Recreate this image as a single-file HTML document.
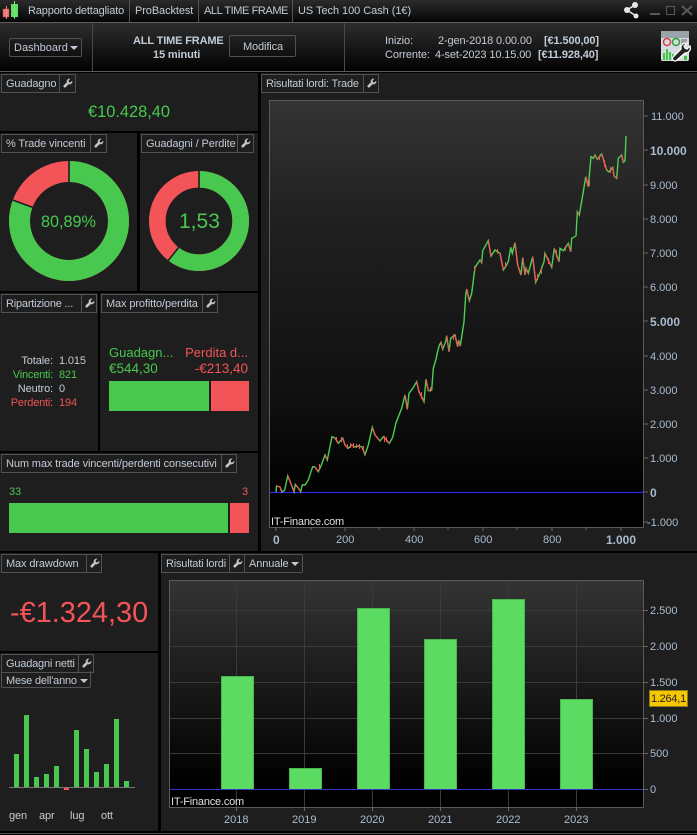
<!DOCTYPE html>
<html lang="it"><head><meta charset="utf-8"><title>Rapporto dettagliato</title>
<style>
html,body{margin:0;padding:0;background:#000}
#r{position:relative;width:697px;height:835px;overflow:hidden;background:#000;font-family:"Liberation Sans",Arial,sans-serif;font-size:11px;color:#c2ccd6}
.a{position:absolute}
.t{position:absolute;white-space:nowrap;line-height:14px;margin-top:1px;letter-spacing:-.12px}
.p{position:absolute;background:#1e1e1e}
.h{position:absolute;height:17px;border:1px solid #525252;box-sizing:content-box}
.d{position:absolute;top:0;bottom:0;width:1px;background:#525252}
.w{position:absolute;width:10px;height:10px;fill:#c4c4c4;margin:1px 0 0 1px}
.g{color:#48c84e}.e{color:#f25457}
.ax{font-size:11px;color:#a9bccf;letter-spacing:0}
.b{font-weight:bold}
.tri{position:absolute;width:0;height:0;border-left:4px solid transparent;border-right:4px solid transparent;border-top:4px solid #c2ccd6}
</style></head><body><div id="r">
<svg width="0" height="0" style="position:absolute"><symbol id="wr" viewBox="0 0 24 24"><path d="M22 6.500l-4.200 4.200-3.600-.9-.9-3.600L17.500 2a6.500 6.500 0 0 0-8.300 8.300L2 17.500a3 3 0 0 0 4.500 4.500l7.200-7.200A6.500 6.500 0 0 0 22 6.500z"/></symbol></svg>

<!-- title bar -->
<div class="a" style="left:0;top:0;width:697px;height:22px;background:linear-gradient(#2b2b2b,#050505)"></div>
<div class="a" style="left:0;top:22px;width:697px;height:1px;background:#5c5c5c"></div>
<svg class="a" style="left:2px;top:1px" width="18" height="18"><rect x="1" y="8" width="6" height="8" fill="#f07a7c" stroke="#c44" stroke-width=".5"/><rect x="4" y="5" width="1" height="13" fill="#e88"/><rect x="9" y="3" width="7" height="13" fill="#5fe060"/><rect x="12" y="0" width="1" height="18" fill="#7de87e"/></svg>
<div class="t" style="left:28px;top:3px;letter-spacing:-.15px">Rapporto dettagliato</div>
<div class="a" style="left:129px;top:0;width:1px;height:22px;background:#555"></div>
<div class="t" style="left:135px;top:3px;letter-spacing:-.1px">ProBacktest</div>
<div class="a" style="left:198px;top:0;width:1px;height:22px;background:#555"></div>
<div class="t" style="left:204px;top:3px;letter-spacing:-.42px">ALL TIME FRAME</div>
<div class="a" style="left:292px;top:0;width:1px;height:22px;background:#555"></div>
<div class="t" style="left:298px;top:3px;letter-spacing:-.05px">US Tech 100 Cash (1€)</div>
<svg class="a" style="left:622px;top:1px" width="20" height="18"><g fill="#e8e8e8"><circle cx="5" cy="9" r="3"/><circle cx="13" cy="4" r="3"/><circle cx="14" cy="15" r="2.500"/></g><path d="M5 9L13 4M5 9L14 15" stroke="#e8e8e8" stroke-width="1.500"/></svg>
<div class="a" style="left:650px;top:13px;width:10px;height:2px;background:#5a5a5a"></div>
<div class="a" style="left:666px;top:6px;width:7px;height:7px;border:1.500px solid #5a5a5a"></div>
<svg class="a" style="left:681px;top:5px" width="12" height="11"><path d="M1 1L11 10M11 1L1 10" stroke="#5a5a5a" stroke-width="2"/></svg>

<!-- toolbar -->
<div class="a" style="left:0;top:23px;width:697px;height:48px;background:linear-gradient(#2d2d2d,#020202)"></div>
<div class="a" style="left:0;top:71px;width:697px;height:1px;background:#5c5c5c"></div>
<div class="a" style="left:92px;top:23px;width:1px;height:48px;background:#4a4a4a"></div>
<div class="a" style="left:344px;top:23px;width:1px;height:48px;background:#4a4a4a"></div>
<div class="a" style="left:9px;top:38px;width:71px;height:17px;border:1px solid #525252;border-radius:2px"></div>
<div class="t" style="left:14px;top:40px;letter-spacing:0">Dashboard</div>
<div class="tri" style="left:70px;top:46px"></div>
<div class="t b" style="left:133px;top:33px;letter-spacing:-.15px">ALL TIME FRAME</div>
<div class="t b" style="left:153px;top:47px">15 minuti</div>
<div class="a" style="left:229px;top:35px;width:65px;height:20px;border:1px solid #525252;border-radius:2px"></div>
<div class="t" style="left:243px;top:39px">Modifica</div>
<div class="t" style="left:385px;top:33px">Inizio:</div>
<div class="t" style="left:438px;top:33px">2-gen-2018 0.00.00</div>
<div class="t b" style="left:544px;top:33px">[€1.500,00]</div>
<div class="t" style="left:385px;top:47px">Corrente:</div>
<div class="t" style="left:435px;top:47px">4-set-2023 10.15.00</div>
<div class="t b" style="left:538px;top:47px">[€11.928,40]</div>
<svg class="a" style="left:660px;top:30px" width="32" height="34"><rect x="1" y="1" width="28" height="30" rx="2" fill="#d5dbe0"/><rect x="1" y="1" width="28" height="7" fill="#9aa3aa"/><circle cx="7" cy="12" r="3.500" fill="none" stroke="#d84040" stroke-width="1.500"/><circle cx="16" cy="12" r="3.500" fill="none" stroke="#2ca02c" stroke-width="1.500"/><path d="M21 10h6M21 12h6M21 14h6" stroke="#666"/><path d="M3 30V23h2v7zM6 30V19h2v11zM9 30v-8h2v8zM12 30v-6h2v6zM24 30v-4h3v4z" fill="#3fc43f"/><path d="M30 16l-3 3-2-1-1-2 3-3a5 5 0 0 0-6 6L13 27a2.500 2.500 0 0 0 4 3l8-7a5 5 0 0 0 5-7z" fill="#222" stroke="#fff" stroke-width="1.300"/></svg>

<!-- left panels -->
<div class="p" style="left:0;top:73px;width:258px;height:58px"></div>
<div class="h" style="left:1px;top:74px;width:73px"><div class="d" style="left:57px"></div><svg class="w" style="left:60px;top:2px"><use href="#wr"/></svg></div>
<div class="t" style="left:6px;top:76px">Guadagno</div>
<div class="t g" style="left:88px;top:104px;font-size:16.400px;letter-spacing:0">€10.428,40</div>

<div class="p" style="left:0;top:133px;width:137px;height:158px"></div>
<div class="h" style="left:1px;top:134px;width:104px"><div class="d" style="left:88px"></div><svg class="w" style="left:91px;top:2px"><use href="#wr"/></svg></div>
<div class="t" style="left:6px;top:136px">% Trade vincenti</div>
<div class="p" style="left:140px;top:133px;width:118px;height:158px"></div>
<div class="h" style="left:141px;top:134px;width:111px"><div class="d" style="left:95px"></div><svg class="w" style="left:98px;top:2px"><use href="#wr"/></svg></div>
<div class="t" style="left:146px;top:136px">Guadagni / Perdite</div>
<svg class="a" style="left:0;top:133px" width="258" height="158">
<g transform="translate(69 88) rotate(-90)" fill="none" stroke-width="21"><circle r="49.500" stroke="#f25457"/><circle r="49.500" stroke="#48c84e" pathLength="100" stroke-dasharray="80.890 19.110"/></g>
<path d="M69 27V50M12.700 67L33 74.500" stroke="#1e1e1e" stroke-width="1.600"/>
<g transform="translate(199 88) rotate(-90)" fill="none" stroke-width="16.700"><circle r="41.700" stroke="#f25457"/><circle r="41.700" stroke="#48c84e" pathLength="100" stroke-dasharray="60.500 39.500"/></g>
<path d="M199 37V56M168.300 127.500L178.600 114.500" stroke="#1e1e1e" stroke-width="1.600"/>
</svg>
<div class="t g" style="left:41px;top:214px;font-size:16.200px;letter-spacing:0">80,89%</div>
<div class="t g" style="left:179px;top:214px;font-size:21px;letter-spacing:0">1,53</div>

<div class="p" style="left:0;top:293px;width:98px;height:158px"></div>
<div class="h" style="left:1px;top:294px;width:94px"><div class="d" style="left:79px"></div><svg class="w" style="left:82px;top:2px"><use href="#wr"/></svg></div>
<div class="t" style="left:6px;top:296px;letter-spacing:-.2px">Ripartizione ...</div>
<div class="t" style="right:644px;top:353px">Totale:</div><div class="t" style="left:59px;top:353px">1.015</div>
<div class="t g" style="right:644px;top:367px;letter-spacing:-.2px">Vincenti:</div><div class="t g" style="left:59px;top:367px">821</div>
<div class="t" style="right:644px;top:381px">Neutro:</div><div class="t" style="left:59px;top:381px">0</div>
<div class="t e" style="right:644px;top:395px;letter-spacing:-.2px">Perdenti:</div><div class="t e" style="left:59px;top:395px">194</div>

<div class="p" style="left:100px;top:293px;width:158px;height:158px"></div>
<div class="h" style="left:101px;top:294px;width:115px"><div class="d" style="left:100px"></div><svg class="w" style="left:103px;top:2px"><use href="#wr"/></svg></div>
<div class="t" style="left:106px;top:296px">Max profitto/perdita</div>
<div class="t g" style="left:109px;top:345px;font-size:13px;letter-spacing:0">Guadagn...</div>
<div class="t e" style="right:449px;top:345px;font-size:13px;letter-spacing:0">Perdita d...</div>
<div class="t g" style="left:109px;top:361px;font-size:13.500px;letter-spacing:0">€544,30</div>
<div class="t e" style="right:449px;top:361px;font-size:13.500px;letter-spacing:0">-€213,40</div>
<div class="a" style="left:109px;top:381px;width:100px;height:30px;background:#48c84e"></div>
<div class="a" style="left:211px;top:381px;width:38px;height:30px;background:#f25457"></div>

<div class="p" style="left:0;top:453px;width:258px;height:98px"></div>
<div class="h" style="left:1px;top:454px;width:234px"><div class="d" style="left:219px"></div><svg class="w" style="left:222px;top:2px"><use href="#wr"/></svg></div>
<div class="t" style="left:6px;top:456px">Num max trade vincenti/perdenti consecutivi</div>
<div class="t g" style="left:9px;top:484px">33</div>
<div class="t e" style="right:449px;top:484px">3</div>
<div class="a" style="left:9px;top:503px;width:219px;height:30px;background:#48c84e"></div>
<div class="a" style="left:230px;top:503px;width:19px;height:30px;background:#f25457"></div>

<!-- top chart -->
<div class="p" style="left:261px;top:73px;width:436px;height:478px"></div>
<div class="h" style="left:261px;top:74px;width:116px"><div class="d" style="left:101px"></div><svg class="w" style="left:104px;top:2px"><use href="#wr"/></svg></div>
<div class="t" style="left:266px;top:76px;letter-spacing:-.2px">Risultati lordi: Trade</div>
<svg class="a" style="left:0;top:0" width="697" height="551">
<defs><linearGradient id="bg1" x1="0" y1="0" x2="0" y2="1"><stop offset="0" stop-color="#343434"/><stop offset=".3" stop-color="#1f1f1f"/><stop offset=".7" stop-color="#101010"/><stop offset=".93" stop-color="#000"/><stop offset="1" stop-color="#000"/></linearGradient></defs>
<rect x="269.500" y="100.500" width="374" height="427" fill="url(#bg1)" stroke="#5a5a5a"/>
<path d="M643 116h5M643 150h5M643 185h5M643 219h5M643 253h5M643 287h5M643 321h5M643 356h5M643 390h5M643 424h5M643 458h5M643 492h5M643 522h5M276 527v4M311 527v3M345 527v4M379 527v3M414 527v4M448 527v3M483 527v4M517 527v3M552 527v4M586 527v3M621 527v4" stroke="#666" fill="none"/>
<path d="M269.500 492.500H643.500" stroke="#2b2be6" stroke-width="1.200"/>
<polyline fill="none" stroke="#4cd052" stroke-width="1.400" stroke-linejoin="miter" points="276,492 276.500,486 280,487 282,492 284.700,490 287.700,475.700 290.700,483 294,491.700 295.300,484.300 298.300,488 300.700,491.700 302.300,485 305,485 308.300,480 310.700,472.700 312.700,466.700 315,467 318.300,471.700 321,466 325,455 327.300,460 329.300,450 332,436.700 335,438 338.300,443.300 342.700,438.300 345,445 348.300,448.300 351.700,445 355,447 358.300,446 362,447 365,454.700 368.300,445 372.300,427.300 375,435 380,441 383.300,436.700 389.300,443.300 392.700,437.300 396,422.700 401.700,408.300 405,395 407.300,409.300 409,393.300 413,388 416.700,381.700 419,391.700 424,401.700 426,379.300 428.300,390.700 431.700,390 433.300,368.300 436,359.300 437.300,352.700 439.300,345.300 441,342.300 442.700,349.300 445.700,341.700 446.700,335.700 449,351.700 450.700,338.300 455,335 457.700,346.700 458.700,340 460.300,346 461.700,336.700 464,321.700 465.700,295 466.700,289 469.300,300.700 471.700,293.300 475,267.300 480,260 481.700,262.700 482.700,250.700 488.300,240.700 491,256 495,250 500,253.300 503.300,270 506,266 508.300,261.700 510.700,247.300 512.300,253.300 515,242.700 517.700,265 521,275 522.700,257.700 525,275 526,268.300 528.300,273.300 532.700,256.700 535.700,282.300 540,272.700 544,261.700 545,253.300 551.700,267.300 554.300,248.300 559,261.700 560,248.300 563.300,250.700 568.300,243.300 570.700,251.700 571.700,238.300 576,236 577.300,211.700 579.300,215 583.300,191.700 585.700,176.700 588.300,186.700 591,156.700 593.300,158.300 595,155 597.300,159.300 601.700,154 606.700,170 609,172 612.700,167.300 614,176 616.700,178.300 618.300,158.300 621.700,155 623.300,162.300 625,160.700 626,136"/>
<path fill="none" stroke="#f25457" stroke-width="1.300" d="M276.500 486L280 487 282 492M287.700 475.700L290.700 483 294 491.700M295.300 484.300L298.300 488 300.700 491.700M315 467L318.300 471.700M325 455L327.300 460M335 438L338.300 443.300M342.700 438.300L345 445 348.300 448.300M351.700 445L355 447M362 447L365 454.700M372.300 427.300L375 435 380 441M383.300 436.700L389.300 443.300M405 395L407.300 409.300M416.700 381.700L419 391.700 424 401.700M426 379.300L428.300 390.700M441 342.300L442.700 349.300M446.700 335.700L449 351.700M455 335L457.700 346.700M458.700 340L460.300 346M466.700 289L469.300 300.700M480 260L481.700 262.700M488.300 240.700L491 256M500 253.300L503.300 270M515 242.700L517.700 265 521 275M522.700 257.700L525 275M526 268.300L528.300 273.300M532.700 256.700L535.700 282.300M545 253.300L551.700 267.300M554.300 248.300L559 261.700M568.300 243.300L570.700 251.700M577.300 211.700L579.300 215M585.700 176.700L588.300 186.700M595 155L597.300 159.300M601.700 154L606.700 170M612.700 167.300L614 176 616.700 178.300M621.700 155L623.300 162.300"/>
<path fill="none" stroke="#f25457" stroke-width="1" d="M347.500 444v5M350.500 443v5M353.500 443v5M356.500 444v4M359.500 444v5M363.500 446v6M319.500 464v6M336.500 437v5M341.500 437v5M384.500 436v6M386.500 437v5M421.500 392v7M430.500 387v5M453.500 334v6M474.500 266v5M497.500 249v5M505.500 262v6M537.500 274v6M541.500 268v6M548.500 258v6M556.500 250v7M565.500 246v5M589.500 178v8M599.500 155v5M604.500 160v7M610.500 167v6"/>
</svg>
<div class="t" style="left:271px;top:514px;color:#e0e0e0;letter-spacing:-.2px">IT-Finance.com</div>
<div class="t ax" style="left:651px;top:109px">11.000</div>
<div class="t ax b" style="left:650px;top:143px;font-size:12px">10.000</div>
<div class="t ax" style="left:650px;top:178px">9.000</div>
<div class="t ax" style="left:650px;top:212px">8.000</div>
<div class="t ax" style="left:650px;top:246px">7.000</div>
<div class="t ax" style="left:650px;top:280px">6.000</div>
<div class="t ax b" style="left:650px;top:314px;font-size:12px">5.000</div>
<div class="t ax" style="left:650px;top:349px">4.000</div>
<div class="t ax" style="left:650px;top:383px">3.000</div>
<div class="t ax" style="left:650px;top:417px">2.000</div>
<div class="t ax" style="left:650px;top:451px">1.000</div>
<div class="t ax b" style="left:650px;top:485px;font-size:12px">0</div>
<div class="t ax" style="left:647px;top:515px">-1.000</div>
<div class="t ax b" style="left:273px;top:532px;font-size:12px">0</div>
<div class="t ax" style="left:336px;top:532px">200</div>
<div class="t ax" style="left:405px;top:532px">400</div>
<div class="t ax" style="left:474px;top:532px">600</div>
<div class="t ax" style="left:543px;top:532px">800</div>
<div class="t ax b" style="left:606px;top:532px;font-size:12px">1.000</div>

<!-- bottom left -->
<div class="p" style="left:0;top:553px;width:158px;height:98px"></div>
<div class="h" style="left:1px;top:554px;width:99px"><div class="d" style="left:84px"></div><svg class="w" style="left:87px;top:2px"><use href="#wr"/></svg></div>
<div class="t" style="left:6px;top:556px">Max drawdown</div>
<div class="t e" style="left:10px;top:605px;font-size:28.900px;letter-spacing:0">-€1.324,30</div>

<div class="p" style="left:0;top:653px;width:158px;height:178px"></div>
<div class="h" style="left:1px;top:654px;width:91px"><div class="d" style="left:76px"></div><svg class="w" style="left:79px;top:2px"><use href="#wr"/></svg></div>
<div class="t" style="left:6px;top:656px;letter-spacing:-.2px">Guadagni netti</div>
<div class="a" style="left:1px;top:671px;width:88px;height:16px;border:1px solid #525252;border-top:0;border-radius:0 0 2px 2px"></div>
<div class="t" style="left:6px;top:673px;letter-spacing:-.2px">Mese dell'anno</div>
<div class="tri" style="left:80px;top:679px"></div>
<svg class="a" style="left:0;top:700px" width="158" height="100"><g fill="#48c84e"><rect x="14" y="54" width="5" height="33"/><rect x="24" y="15" width="5" height="72"/><rect x="34" y="77" width="5" height="10"/><rect x="44" y="74" width="5" height="13"/><rect x="54" y="66" width="5" height="21"/><rect x="74" y="30" width="5" height="57"/><rect x="84" y="49" width="5" height="38"/><rect x="94" y="72" width="5" height="15"/><rect x="104" y="64" width="5" height="23"/><rect x="114" y="19" width="5" height="68"/><rect x="124" y="81" width="5" height="6"/></g><rect x="64" y="87" width="5" height="3" fill="#f25457"/><rect x="9" y="87" width="126" height="1" fill="#777"/></svg>
<div class="t" style="left:9px;top:808px">gen</div>
<div class="t" style="left:39px;top:808px">apr</div>
<div class="t" style="left:70px;top:808px">lug</div>
<div class="t" style="left:101px;top:808px">ott</div>

<!-- bottom right -->
<div class="p" style="left:161px;top:553px;width:536px;height:278px"></div>
<div class="h" style="left:161px;top:554px;width:140px;border-radius:0 2px 2px 0"><div class="d" style="left:67px"></div><svg class="w" style="left:70px;top:2px"><use href="#wr"/></svg><div class="d" style="left:82px"></div></div>
<div class="t" style="left:166px;top:556px;letter-spacing:-.2px">Risultati lordi</div>
<div class="t" style="left:249px;top:556px">Annuale</div>
<div class="tri" style="left:291px;top:562px"></div>
<svg class="a" style="left:0;top:553px" width="697" height="278">
<defs><linearGradient id="bg2" x1="0" y1="0" x2="0" y2="1"><stop offset="0" stop-color="#343434"/><stop offset=".45" stop-color="#1a1a1a"/><stop offset=".9" stop-color="#000"/><stop offset="1" stop-color="#000"/></linearGradient></defs>
<rect x="169.500" y="27.500" width="474" height="227" fill="url(#bg2)" stroke="#5a5a5a"/>
<path d="M236.500 28V254M304.500 28V254M372.500 28V254M440.500 28V254M508.500 28V254M576.500 28V254M170 57.500H643M170 93.500H643M170 129.500H643M170 165.500H643M170 200.500H643" stroke="#3a3a3a" fill="none"/>
<path d="M236.500 254v4M304.500 254v4M372.500 254v4M440.500 254v4M508.500 254v4M576.500 254v4M643 57.500h5M643 93.500h5M643 129.500h5M643 165.500h5M643 200.500h5M643 236.500h5" stroke="#666" fill="none"/>
<g fill="#5cdb62" stroke="#48b84e"><rect x="221.500" y="123.500" width="32" height="113"/><rect x="289.500" y="215.500" width="32" height="21"/><rect x="357.500" y="55.500" width="32" height="181"/><rect x="424.500" y="86.500" width="32" height="150"/><rect x="492.500" y="46.500" width="32" height="190"/><rect x="560.500" y="146.500" width="32" height="90"/></g>
<path d="M170 236.500H643" stroke="#3434c8" stroke-width="1"/>
</svg>
<div class="t" style="left:171px;top:794px;color:#e0e0e0;letter-spacing:-.2px">IT-Finance.com</div>
<div class="t ax" style="left:650px;top:603px">2.500</div>
<div class="t ax" style="left:650px;top:639px">2.000</div>
<div class="t ax" style="left:650px;top:675px">1.500</div>
<div class="t ax" style="left:650px;top:711px">1.000</div>
<div class="t ax" style="left:650px;top:746px">500</div>
<div class="t ax" style="left:650px;top:782px">0</div>
<div class="a" style="left:649px;top:690px;width:39px;height:17px;background:#f7c800;border:1px solid #8a7a20;box-sizing:border-box"></div>
<div class="t" style="left:651px;top:691px;color:#222;letter-spacing:-.25px">1.264,1</div>
<div class="t ax" style="left:224px;top:812px">2018</div>
<div class="t ax" style="left:292px;top:812px">2019</div>
<div class="t ax" style="left:360px;top:812px">2020</div>
<div class="t ax" style="left:428px;top:812px">2021</div>
<div class="t ax" style="left:496px;top:812px">2022</div>
<div class="t ax" style="left:564px;top:812px">2023</div>

<div class="a" style="left:0;top:833px;width:697px;height:1px;background:#555"></div>
</div></body></html>
